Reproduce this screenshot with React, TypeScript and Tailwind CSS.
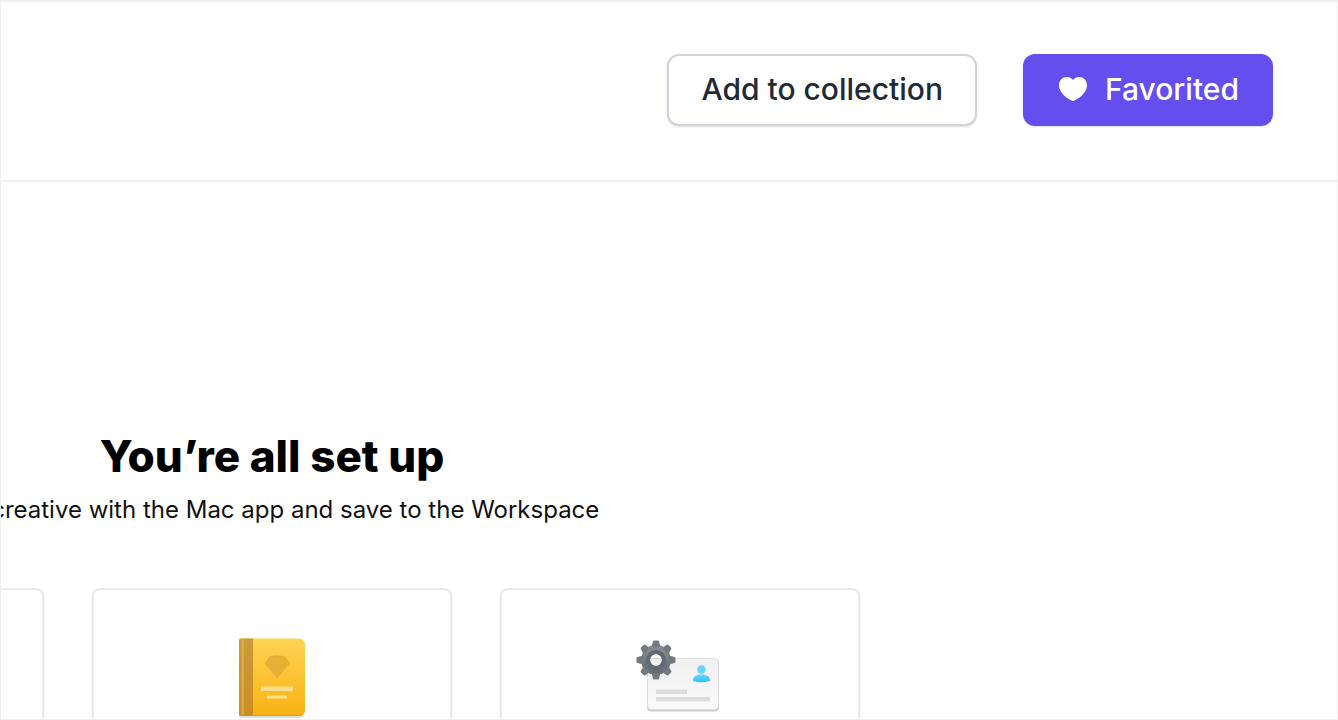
import type { ReactNode } from 'react';

function HeartIcon() {
  return (
    <svg viewBox="0 0 28 24" className="h-6 w-7 shrink-0" fill="currentColor" aria-hidden="true">
      <path d="M14 3C12.400 1.100 10.400 0 8 0C3.500 0 0 3.400 0 8.200C0 14.500 5.200 19.600 12.500 23.600C13.500 24.150 14.500 24.150 15.500 23.600C22.800 19.600 28 14.500 28 8.200C28 3.400 24.500 0 20 0C17.600 0 15.600 1.100 14 3Z" />
    </svg>
  );
}

function BookIcon() {
  return (
    <svg viewBox="0 0 72 82" className="h-[82px] w-[72px]" aria-hidden="true">
      <defs>
        <linearGradient id="cover" x1="0" y1="0" x2="0" y2="1">
          <stop offset="0" stopColor="#ffd355" />
          <stop offset="1" stopColor="#f9b312" />
        </linearGradient>
        <linearGradient id="spine" x1="0" y1="0" x2="0" y2="1">
          <stop offset="0" stopColor="#cc9a3a" />
          <stop offset="1" stopColor="#c98f22" />
        </linearGradient>
      </defs>
      <path d="M5 2H63a6 6 0 0 1 6 6v66a6 6 0 0 1-6 6H5a2 2 0 0 1-2-2V4a2 2 0 0 1 2-2Z" fill="#000" opacity=".12" />
      <path d="M5 .5H63a6 6 0 0 1 6 6v65.500a6 6 0 0 1-6 6H5a2 2 0 0 1-2-2V2.500a2 2 0 0 1 2-2Z" fill="url(#cover)" />
      <path d="M17 77H63a6 6 0 0 0 5-3a6 6 0 0 1-5 4H17Z" fill="#d99508" opacity=".7" />
      <path d="M5 .5H17V78H5a2 2 0 0 1-2-2V2.500a2 2 0 0 1 2-2Z" fill="url(#spine)" />
      <path d="M5.500 1H8V77.500H5.500Z" fill="#e0b660" opacity=".65" />
      <path d="M33.500 18.500Q41 17 48.500 18.500L54 25.500L41 40.500L28.500 25.500Z" fill="#e6b132" />
      <path d="M33.500 18.500Q41 17 48.500 18.500L54 25.500" fill="none" stroke="#d7a024" strokeWidth="1" opacity=".5" />
      <path d="M25 48.500H57V53H25ZM31 57.500H51V60.500H31Z" fill="#ffdf8b" />
    </svg>
  );
}

function ProfileIcon() {
  return (
    <svg viewBox="0 0 88 76" className="h-[76px] w-[88px]" aria-hidden="true">
      <defs>
        <linearGradient id="paper" x1="0" y1="0" x2="0" y2="1">
          <stop offset="0" stopColor="#f0f0f0" />
          <stop offset="1" stopColor="#fafafa" />
        </linearGradient>
        <linearGradient id="gear" x1="0" y1="0" x2="0" y2="1">
          <stop offset="0" stopColor="#858b92" />
          <stop offset="1" stopColor="#656c74" />
        </linearGradient>
        <linearGradient id="person" x1="0" y1="0" x2="0" y2="1">
          <stop offset="0" stopColor="#5fd6ff" />
          <stop offset="1" stopColor="#35bff8" />
        </linearGradient>
      </defs>
      <rect x="11" y="21" width="72" height="52.500" rx="4" fill="#cfcfcf" />
      <rect x="11.500" y="20.500" width="71" height="51" rx="4" fill="url(#paper)" stroke="#dedede" />
      <path d="M20 51.500H51V56H20ZM20 59H74V63.500H20Z" fill="#dddddd" />
      <circle cx="65.500" cy="31.500" r="4.200" fill="#5fd6ff" />
      <path d="M57 42.500C57 38.500 60.500 36.500 65.500 36.500S74 38.500 74 42.500C72.500 44.800 58.500 44.800 57 42.500Z" fill="url(#person)" />
      <path
        d="M20 11.500A10.500 10.500 0 1 0 20 32.500A10.500 10.500 0 1 0 20 11.500Z"
        fill="none"
        stroke="url(#gear)"
        strokeWidth="9"
      />
      <g fill="#737980">
        {[0, 45, 90, 135, 180, 225, 270, 315].map((angle) => (
          <path key={angle} d="M15.500 9L17 3.500Q17.300 2.500 18.300 2.500H21.700Q22.700 2.500 23 3.500L24.500 9Z" transform={`rotate(${angle} 20 22)`} />
        ))}
      </g>
      <circle cx="20" cy="22" r="8" fill="none" stroke="#626970" strokeWidth="4" />
    </svg>
  );
}

function Card({ children }: { children?: ReactNode }) {
  return (
    <div className="flex h-[360px] flex-1 justify-center rounded-lg border-2 border-[#ebebeb] bg-white pt-12 shadow-sm">
      {children}
    </div>
  );
}

export default function App() {
  return (
    <div className="flex h-screen flex-col overflow-hidden border border-t-2 border-[#efefef] bg-white font-['Inter',sans-serif]">
      {/* Toolbar */}
      <header className="flex shrink-0 items-center justify-end gap-[46px] border-b-2 border-[#efefef] pt-[52px] pr-16 pb-[54px]">
        <button type="button" className="h-[72px] rounded-xl border-2 border-[#d1d5db] bg-white px-8 pb-0.5 text-[30px] font-medium text-[#1f2937] shadow-sm">
          Add to collection
        </button>
        <button type="button" className="flex h-[72px] items-center gap-[18px] rounded-xl bg-[#644eee] pr-[34px] pb-0.5 pl-9 text-[30px] font-medium text-white shadow-sm">
          <HeartIcon />
          Favorited
        </button>
      </header>

      {/* Preview, runs off the left and bottom edges */}
      <main className="flex min-h-0 flex-1 justify-end overflow-hidden pt-[246px] pr-[477px]">
        <div className="w-[1176px] shrink-0 text-center">
          <h1 className="text-[44px] leading-[56px] font-extrabold text-black">You’re all set up</h1>
          <p className="mt-1.5 text-2xl leading-10 text-[#111111]">
            Get creative with the Mac app and save to the Workspace
          </p>
          <div className="mt-[58px] flex gap-12">
            <Card />
            <Card>
              <BookIcon />
            </Card>
            <Card>
              <ProfileIcon />
            </Card>
          </div>
        </div>
      </main>
    </div>
  );
}
